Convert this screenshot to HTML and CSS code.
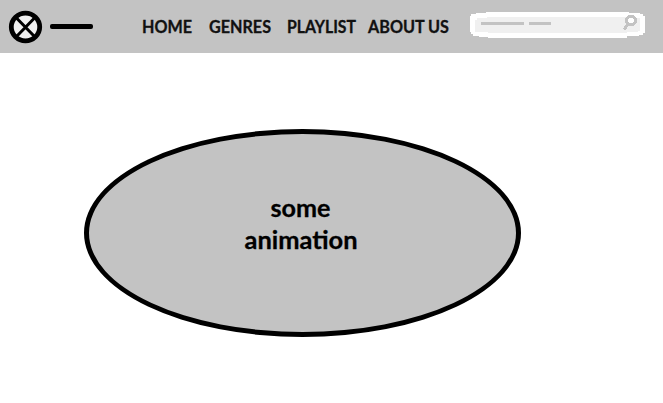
FILE: index.html
```html
<!DOCTYPE html>
<html lang="en">
<head>
<meta charset="utf-8">
<title>Music</title>
<link rel="stylesheet" href="styles.css">
</head>
<body>
<header class="bar">
  <svg class="logo" width="34" height="34" viewBox="0 0 34 34">
    <ellipse cx="17.5" cy="17" rx="14.2" ry="13.8"/>
    <path d="M8.5 8L26 26M26.5 8L9 26"/>
  </svg>
  <span class="dash"></span>
  <nav class="nav">
    <a><svg width="49" height="24"><text x="0" y="17.4" textLength="50" lengthAdjust="spacingAndGlyphs">HOME</text></svg></a>
    <a><svg width="62" height="24"><text x="0" y="17.4" textLength="62" lengthAdjust="spacingAndGlyphs">GENRES</text></svg></a>
    <a><svg width="68" height="24"><text x="-1" y="17.4" textLength="69" lengthAdjust="spacingAndGlyphs">PLAYLIST</text></svg></a>
    <a><svg width="81" height="24"><text x="0" y="17.4" textLength="81" lengthAdjust="spacingAndGlyphs">ABOUT US</text></svg></a>
  </nav>
  <div class="search">
    <svg width="175" height="26" viewBox="0 0 175 26" shape-rendering="crispEdges">
      <path class="rim" d="M16 0H159V1H170V2H173V4H175V21H173V23H169V24H157V26H18V25H9V24H3V22H1V20H0V4H1V2H6V1H16Z"/>
      <path class="well" d="M17 5H158V6H170V19H168V20H157V21H18V20H5V8H7V6H17Z"/>
      <path class="hint" d="M11 11.5H54M59 11.5H81"/>
      <g class="lens"><ellipse cx="161" cy="8.5" rx="4.6" ry="4.2"/><path d="M158.3 12L154 17.5"/></g>
    </svg>
  </div>
</header>
<main class="stage">
  <section class="bubble">
    <svg width="114" height="64">
      <text x="26.5" y="28" textLength="60" lengthAdjust="spacingAndGlyphs">some</text>
      <text x="0.5" y="60" textLength="113" lengthAdjust="spacingAndGlyphs">animation</text>
    </svg>
  </section>
</main>
</body>
</html>
```
FILE: styles.css
```css
body {
  margin: 0;
  background: #fff;
  font-family: Lato, "Liberation Sans", sans-serif;
}
svg {
  display: block;
  overflow: visible;
}
.bar {
  display: flex;
  height: 53px;
  background: #c3c3c3;
}
.logo {
  margin: 10px 0 0 8px;
  fill: #f0f0f0;
  stroke: #000;
  stroke-width: 4.8;
}
.logo path {
  stroke-width: 3;
}
.dash {
  width: 43px;
  height: 5px;
  margin: 24px 0 0 8px;
  border-radius: 2px;
  background: #000;
}
.nav {
  display: flex;
  margin: 16px 0 0 49px;
}
.nav a:nth-child(2) { margin-left: 18px; }
.nav a:nth-child(3) { margin-left: 17px; }
.nav a:nth-child(4) { margin-left: 12px; }
.nav text {
  font-size: 16.5px;
  font-weight: 700;
  fill: #111;
  stroke: #111;
  stroke-width: 0.3;
}
.search {
  margin: 12px 0 0 21px;
}
.rim { fill: #fff; }
.well { fill: #f0f0f0; }
.hint {
  stroke: #c3c3c3;
  stroke-width: 3;
}
.lens {
  fill: #fff;
  stroke: #c3c3c3;
  stroke-width: 3;
}
.stage {
  padding: 76px 0 0 84px;
}
.bubble {
  box-sizing: border-box;
  display: flex;
  justify-content: center;
  width: 437px;
  height: 208px;
  padding: 55px 3px 0 0;
  border: 5px solid #000;
  border-radius: 50%;
  background: #c3c3c3;
}
.bubble text {
  font-size: 25px;
  font-weight: 700;
  stroke: #000;
  stroke-width: 0.3;
}
```
